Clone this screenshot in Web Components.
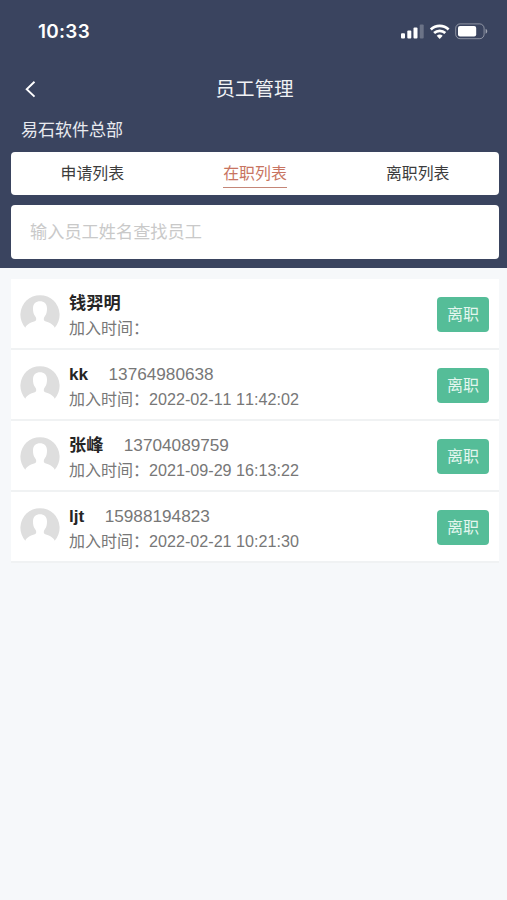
<!DOCTYPE html>
<html lang="zh-CN">
<head>
<meta charset="utf-8">
<title>员工管理</title>
<style>
html,body{margin:0;height:100%}
body{background:#f6f8fa;font-family:"Liberation Sans","Noto Sans CJK SC",sans-serif;font-kerning:none;color:#777}
</style>
</head>
<body>
<staff-page></staff-page>
<script>
function define(name, html, setup) {
  const t = document.createElement('template');
  t.innerHTML = html;
  customElements.define(name, class extends HTMLElement {
    constructor() {
      super();
      this.attachShadow({mode: 'open'}).append(t.content.cloneNode(true));
    }
    connectedCallback() { if (setup) setup(this, this.shadowRoot); }
  });
}

define('status-bar', `
<style>
:host{display:flex;height:62px;box-sizing:border-box;padding:0 18px 0 38px;align-items:center;justify-content:space-between;color:#fff}
.time{font:600 18.9px/24px Inter,sans-serif;letter-spacing:.3px;padding-top:2px}
svg{display:block}
</style>
<span class="time">10:33</span>
<svg width="88" height="20" viewBox="0 0 88 20">
  <g fill="#fff"><rect x="0" y="12.2" width="4" height="5.4" rx="1"/><rect x="6.3" y="9.4" width="4" height="8.2" rx="1"/><rect x="12.5" y="6.4" width="4" height="11.2" rx="1"/><rect x="18.7" y="3.6" width="4" height="14" rx="1" opacity=".25"/></g>
  <g transform="translate(0 -.6)"><g fill="none" stroke="#fff" stroke-width="2.7"><path d="M29.8 9.1a12.8 12.8 0 0 1 17.8 0"/><path d="M33.1 12.7a8.1 8.1 0 0 1 11.2 0"/></g>
  <path d="M35.7 15.4a4.6 4.6 0 0 1 6 0L38.7 18.6z" fill="#fff"/></g>
  <rect x="54.7" y="2.9" width="28.4" height="14.8" rx="4.4" fill="none" stroke="#fff" stroke-opacity=".42"/>
  <rect x="57" y="5.1" width="18.2" height="10.4" rx="2" fill="#fff"/>
  <path d="M84.6 7.8c2.2.8 2.2 4.3 0 5z" fill="#fff" opacity=".5"/>
</svg>`);

define('nav-bar', `
<style>
:host{display:grid;grid-template-columns:43px 1fr 41px;height:54px;align-items:center;color:#f0f2f5;font-size:19.5px;line-height:28px;text-align:center}
svg{display:block;margin-left:24px}
</style>
<svg width="13" height="18" viewBox="0 0 13 18"><path d="M10.5 1.8L2.7 9.2L10.5 16.6" fill="none" stroke="#fff" stroke-width="1.9"/></svg>
<span><slot></slot></span>`);

define('tab-item', `
<style>
:host{display:flex;flex:1;justify-content:center;align-items:flex-start;color:#3c3c3c;font-size:15.9px}
span{line-height:26px;margin-top:8px;padding-top:1px;border-bottom:1px solid transparent}
:host([active]){color:#c87461}
:host([active]) span{border-color:#c48678}
</style><span><slot></slot></span>`);

define('tab-strip', `
<style>:host{display:flex;height:43px;background:#fff;border-radius:4px}</style><slot></slot>`);

define('search-box', `
<style>
:host{display:flex;align-items:center;height:54px;background:#fff;border-radius:4px;padding-left:19px;color:#c9c9c9;font-size:17.2px;line-height:26px}
</style><slot></slot>`);

define('user-avatar', `
<style>:host{display:block;width:40px;height:40px}svg{display:block}</style>
<svg width="40" height="40" viewBox="0 0 40 40">
  <path d="M5.3 33.7A19.6 19.6 0 1 1 34.7 33.7C33.3 29.8 28 28.2 24.6 27C23.2 25.6 23.7 23.9 25 22C26.5 20 27 17.6 27 14.4C27 9.8 24 7.3 20 7.3S13 9.8 13 14.4C13 17.6 13.5 20 15 22C16.3 23.9 16.8 25.6 15.4 27C12 28.2 6.7 29.8 5.3 33.7Z" fill="#dedede"/>
</svg>`);

define('action-button', `
<style>
:host{display:flex;align-items:center;justify-content:center;width:52px;height:35px;border-radius:4px;background:#55bd98;color:#e3f6ee;font-size:16px;line-height:24px}
</style><slot></slot>`);

define('staff-row', `
<style>
:host{display:flex;box-sizing:border-box;height:71.1px;padding:0 10px 0 9px;background:#fff;border-bottom:2px solid #f0f2f3}
user-avatar{margin-top:14.5px}
.info{flex:1;margin-left:9px;padding-top:12px}
.top,.date{display:flex;align-items:baseline;height:25px;line-height:25px;white-space:nowrap}
.top{font-size:17.2px}
.name{font-weight:700;color:#252525;margin-right:20.4px}
.date{font-size:16.15px}
.label{font-size:16px}
action-button{margin-top:18px}
</style>
<user-avatar></user-avatar>
<div class="info">
  <div class="top"><span class="name"></span><span class="phone"></span></div>
  <div class="date"><span class="label">加入时间：</span><span class="joined"></span></div>
</div>
<action-button>离职</action-button>`, (el, root) => {
  for (const k of ['name', 'phone', 'joined'])
    root.querySelector('.' + k).textContent = el.getAttribute(k) || '';
});

define('staff-page', `
<style>
:host{display:block;min-height:900px;background:#f6f8fa}
header{box-sizing:border-box;height:268px;background:#3a445f}
.org{height:36px;box-sizing:border-box;padding:2px 0 0 21px;font-size:17px;line-height:26px;color:#e8eaef}
.panels{display:flex;flex-direction:column;gap:10px;margin:0 8px 0 11px}
main{display:block;margin:11px 8px 0 11px}
</style>
<header>
  <status-bar></status-bar>
  <nav-bar>员工管理</nav-bar>
  <div class="org">易石软件总部</div>
  <div class="panels">
    <tab-strip><tab-item>申请列表</tab-item><tab-item active>在职列表</tab-item><tab-item>离职列表</tab-item></tab-strip>
    <search-box>输入员工姓名查找员工</search-box>
  </div>
</header>
<main>
  <staff-row name="钱羿明"></staff-row>
  <staff-row name="kk" phone="13764980638" joined="2022-02-11 11:42:02"></staff-row>
  <staff-row name="张峰" phone="13704089759" joined="2021-09-29 16:13:22"></staff-row>
  <staff-row name="ljt" phone="15988194823" joined="2022-02-21 10:21:30"></staff-row>
</main>`);
</script>
</body>
</html>
